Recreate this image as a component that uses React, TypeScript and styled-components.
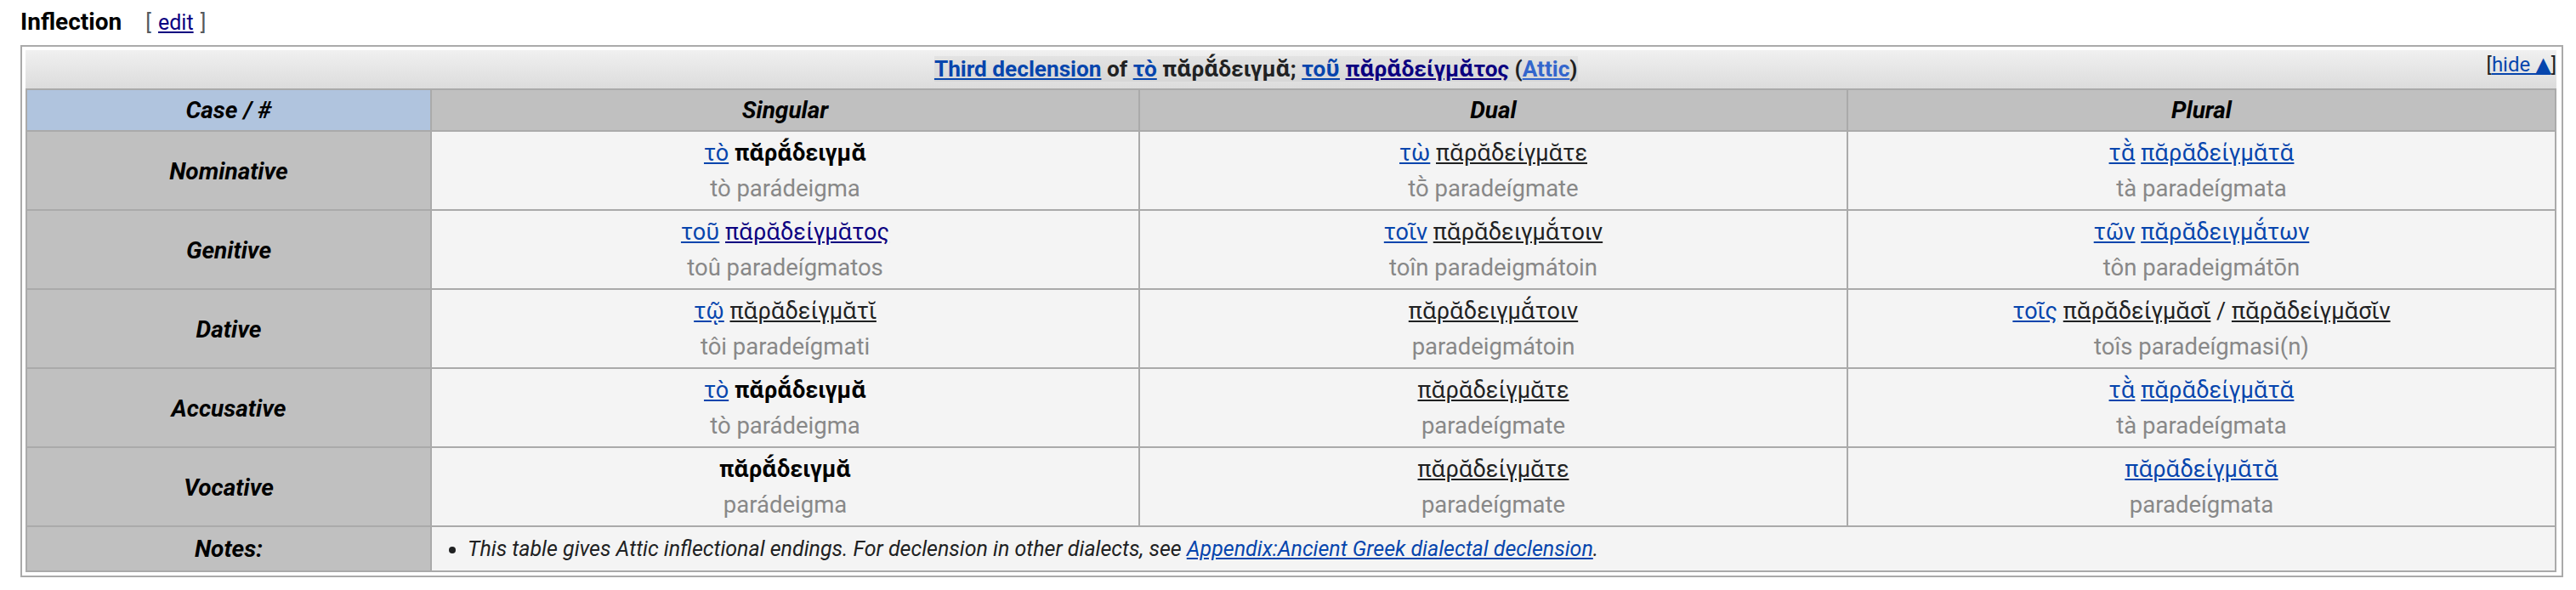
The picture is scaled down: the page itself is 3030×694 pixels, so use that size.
import React from 'react';
import styled, { createGlobalStyle, css } from 'styled-components';

const Global = createGlobalStyle`
  html, body { margin: 0; padding: 0; background: #ffffff; }
  body {
    font-family: Roboto, "Noto Sans", "DejaVu Sans", sans-serif;
    color: #202122;
  }
`;

type Kind = 'link' | 'visited' | 'plain' | 'bold' | 'under' | 'light';
type Part = { t: string; k: Kind };
type Form = { greek: Part[]; roman: string };
type Row = { name: string; forms: Form[] };

const Page = styled.div`
  padding: 0 15px 0 24px;
`;

const HeadingRow = styled.div`
  display: flex;
  align-items: baseline;
  height: 53px;
  padding-top: 2px;
  box-sizing: border-box;
`;

const Heading = styled.h3`
  margin: 0;
  font-size: 28px;
  line-height: 48px;
  font-weight: 700;
  color: #000000;
`;

const EditBox = styled.span`
  margin-left: 28px;
  font-size: 25px;
  color: #54595d;
  word-spacing: 2px;
`;

const EditLink = styled.a`
  color: #0b0080;
  text-decoration: underline;
`;

const Frame = styled.div`
  border: 2px solid #aaaaaa;
  padding: 4px 6px 4px 4px;
`;

const TitleBar = styled.div`
  height: 45px;
  background: linear-gradient(to bottom, #f0f0f0, #dcdcdc);
  text-align: center;
  font-size: 26.2px;
  line-height: 45px;
  font-weight: 700;
  color: #202122;
`;

const TitleText = styled.span`
  background: rgba(0, 0, 0, 0.04);
`;

const HideToggle = styled.span`
  float: right;
  font-size: 24px;
  font-weight: 400;
  line-height: 34px;
  color: #202122;
`;

const HideLink = styled.a`
  color: #0645ad;
  text-decoration: underline;
`;

const Table = styled.table`
  width: 100%;
  table-layout: fixed;
  border-collapse: separate;
  border-spacing: 0;
  border-top: 2px solid #aaaaaa;
  border-left: 2px solid #aaaaaa;
`;

const HeadCell = styled.th<{ $corner?: boolean }>`
  background: ${({ $corner }) => ($corner ? '#b0c4de' : '#c0c0c0')};
  border-right: 2px solid #aaaaaa;
  border-bottom: 2px solid #aaaaaa;
  padding: 7px 8px;
  font-size: 28px;
  line-height: 33px;
  font-weight: 700;
  font-style: italic;
  color: #000000;
  text-align: center;
`;

const CaseCell = styled.th`
  background: #c0c0c0;
  border-right: 2px solid #aaaaaa;
  border-bottom: 2px solid #aaaaaa;
  padding: 4px 8px 3px;
  font-size: 28px;
  font-weight: 700;
  font-style: italic;
  color: #000000;
  text-align: center;
  vertical-align: middle;
`;

const FormCell = styled.td`
  background: #f4f4f4;
  border-right: 2px solid #aaaaaa;
  border-bottom: 2px solid #aaaaaa;
  padding: 4px 8px 3px;
  text-align: center;
  vertical-align: middle;
`;

const GreekLine = styled.div`
  font-size: 27px;
  line-height: 42px;
  white-space: nowrap;
`;

const RomanLine = styled.div`
  font-size: 27.5px;
  line-height: 42px;
  color: #888888;
  white-space: nowrap;
`;

const kindStyles: Record<Kind, ReturnType<typeof css>> = {
  link: css`color: #0645ad; text-decoration: underline;`,
  visited: css`color: #0b0080; text-decoration: underline;`,
  light: css`color: #3366cc; text-decoration: underline;`,
  plain: css`color: #202122; text-decoration: none;`,
  bold: css`color: #000000; font-weight: 700; text-decoration: none;`,
  under: css`color: #202122; text-decoration: underline;`,
};

const Word = styled.span<{ $k: Kind }>`
  ${({ $k }) => kindStyles[$k]}
`;

const NotesLabel = styled.th`
  background: #c0c0c0;
  border-right: 2px solid #aaaaaa;
  border-bottom: 2px solid #aaaaaa;
  padding: 9px 8px;
  font-size: 28px;
  line-height: 33px;
  font-weight: 700;
  font-style: italic;
  color: #000000;
  text-align: center;
`;

const NotesCell = styled.td`
  background: #f4f4f4;
  border-right: 2px solid #aaaaaa;
  border-bottom: 2px solid #aaaaaa;
  padding: 9px 8px;
  text-align: left;
`;

const NotesList = styled.ul`
  margin: 0;
  padding-left: 34px;
  font-size: 25px;
  line-height: 33px;
  font-style: italic;
  color: #202122;
`;

const NoteLink = styled.a`
  color: #0645ad;
  text-decoration: underline;
`;

const L = (t: string): Part => ({ t, k: 'link' });
const U = (t: string): Part => ({ t, k: 'under' });
const B = (t: string): Part => ({ t, k: 'bold' });
const P = (t: string): Part => ({ t, k: 'plain' });
const V = (t: string): Part => ({ t, k: 'visited' });

const rows: Row[] = [
  {
    name: 'Nominative',
    forms: [
      { greek: [L('τὸ'), P(' '), B('πᾰρᾰ́δειγμᾰ')], roman: 'tò parádeigma' },
      { greek: [L('τὼ'), P(' '), U('πᾰρᾰδείγμᾰτε')], roman: 'tṑ paradeígmate' },
      { greek: [L('τᾰ̀'), P(' '), L('πᾰρᾰδείγμᾰτᾰ')], roman: 'tà paradeígmata' },
    ],
  },
  {
    name: 'Genitive',
    forms: [
      { greek: [L('τοῦ'), P(' '), V('πᾰρᾰδείγμᾰτος')], roman: 'toû paradeígmatos' },
      { greek: [L('τοῖν'), P(' '), U('πᾰρᾰδειγμᾰ́τοιν')], roman: 'toîn paradeigmátoin' },
      { greek: [L('τῶν'), P(' '), L('πᾰρᾰδειγμᾰ́των')], roman: 'tôn paradeigmátōn' },
    ],
  },
  {
    name: 'Dative',
    forms: [
      { greek: [L('τῷ'), P(' '), U('πᾰρᾰδείγμᾰτῐ')], roman: 'tôi paradeígmati' },
      { greek: [U('πᾰρᾰδειγμᾰ́τοιν')], roman: 'paradeigmátoin' },
      {
        greek: [L('τοῖς'), P(' '), U('πᾰρᾰδείγμᾰσῐ'), P(' / '), U('πᾰρᾰδείγμᾰσῐν')],
        roman: 'toîs paradeígmasi(n)',
      },
    ],
  },
  {
    name: 'Accusative',
    forms: [
      { greek: [L('τὸ'), P(' '), B('πᾰρᾰ́δειγμᾰ')], roman: 'tò parádeigma' },
      { greek: [U('πᾰρᾰδείγμᾰτε')], roman: 'paradeígmate' },
      { greek: [L('τᾰ̀'), P(' '), L('πᾰρᾰδείγμᾰτᾰ')], roman: 'tà paradeígmata' },
    ],
  },
  {
    name: 'Vocative',
    forms: [
      { greek: [B('πᾰρᾰ́δειγμᾰ')], roman: 'parádeigma' },
      { greek: [U('πᾰρᾰδείγμᾰτε')], roman: 'paradeígmate' },
      { greek: [L('πᾰρᾰδείγμᾰτᾰ')], roman: 'paradeígmata' },
    ],
  },
];

const titleParts: Part[] = [
  L('Third declension'),
  P(' of '),
  L('τὸ'),
  P(' πᾰρᾰ́δειγμᾰ; '),
  L('τοῦ'),
  P(' '),
  V('πᾰρᾰδείγμᾰτος'),
  P(' ('),
  { t: 'Attic', k: 'light' },
  P(')'),
];

const renderParts = (parts: Part[]) =>
  parts.map((p, i) => (
    <Word key={i} $k={p.k}>
      {p.t}
    </Word>
  ));

export default function App() {
  return (
    <>
      <Global />
      <Page>
        <HeadingRow>
          <Heading>Inflection</Heading>
          <EditBox>
            [ <EditLink>edit</EditLink> ]
          </EditBox>
        </HeadingRow>
        <Frame>
          <TitleBar>
            <HideToggle>
              [<HideLink>hide ▲</HideLink>]
            </HideToggle>
            <TitleText>{renderParts(titleParts)}</TitleText>
          </TitleBar>
          <Table>
            <colgroup>
              <col style={{ width: '16%' }} />
              <col style={{ width: '28%' }} />
              <col style={{ width: '28%' }} />
              <col style={{ width: '28%' }} />
            </colgroup>
            <thead>
              <tr>
                <HeadCell $corner>Case / #</HeadCell>
                <HeadCell>Singular</HeadCell>
                <HeadCell>Dual</HeadCell>
                <HeadCell>Plural</HeadCell>
              </tr>
            </thead>
            <tbody>
              {rows.map((r) => (
                <tr key={r.name}>
                  <CaseCell>{r.name}</CaseCell>
                  {r.forms.map((f, i) => (
                    <FormCell key={i}>
                      <GreekLine>{renderParts(f.greek)}</GreekLine>
                      <RomanLine>{f.roman}</RomanLine>
                    </FormCell>
                  ))}
                </tr>
              ))}
              <tr>
                <NotesLabel>Notes:</NotesLabel>
                <NotesCell colSpan={3}>
                  <NotesList>
                    <li>
                      This table gives Attic inflectional endings. For declension in other dialects, see{' '}
                      <NoteLink>Appendix:Ancient Greek dialectal declension</NoteLink>.
                    </li>
                  </NotesList>
                </NotesCell>
              </tr>
            </tbody>
          </Table>
        </Frame>
      </Page>
    </>
  );
}
